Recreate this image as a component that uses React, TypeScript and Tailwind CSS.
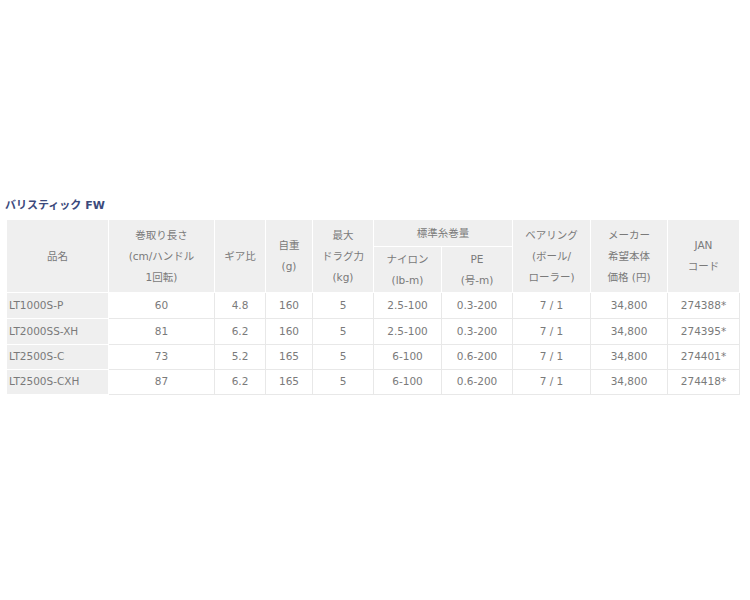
const headCell = 'border border-white bg-[#efefef] px-1 text-center align-middle font-normal leading-[21px]';
const bodyCell = 'border border-[#e8e8e8] bg-white px-1 text-center align-middle';

const rows = [
    ['LT1000S-P', '60', '4.8', '160', '5', '2.5-100', '0.3-200', '7 / 1', '34,800', '274388*'],
    ['LT2000SS-XH', '81', '6.2', '160', '5', '2.5-100', '0.3-200', '7 / 1', '34,800', '274395*'],
    ['LT2500S-C', '73', '5.2', '165', '5', '6-100', '0.6-200', '7 / 1', '34,800', '274401*'],
    ['LT2500S-CXH', '87', '6.2', '165', '5', '6-100', '0.6-200', '7 / 1', '34,800', '274418*'],
];

const widths = [102, 106, 51, 47, 61, 68, 71, 78, 77, 72];

const App = () => {
    return (
        <div
            className="min-h-[600px] w-[750px] bg-white pt-[199px] pl-[6px] text-[10.5px] text-[#7a7a7a]"
            style={{ fontFamily: '"DejaVu Sans", "Noto Sans CJK JP", sans-serif' }}
        >
            <h2 className="mb-[6px] -ml-px text-[11px] leading-[14px] font-bold text-[#3b4a7c]">
                バリスティック FW
            </h2>
            <table className="w-[732px] table-fixed border-collapse">
                <colgroup>
                    {widths.map((w, i) => (
                        <col key={i} style={{ width: w }} />
                    ))}
                </colgroup>
                <thead>
                    <tr className="h-[27px]">
                        <th rowSpan={2} className={headCell}>
                            品名
                        </th>
                        <th rowSpan={2} className={headCell}>
                            巻取り長さ
                            <br />
                            (cm/ハンドル
                            <br />
                            1回転)
                        </th>
                        <th rowSpan={2} className={headCell}>
                            ギア比
                        </th>
                        <th rowSpan={2} className={headCell}>
                            自重
                            <br />
                            (g)
                        </th>
                        <th rowSpan={2} className={headCell}>
                            最大
                            <br />
                            ドラグ力
                            <br />
                            (kg)
                        </th>
                        <th colSpan={2} className={headCell}>
                            標準糸巻量
                        </th>
                        <th rowSpan={2} className={headCell}>
                            ベアリング
                            <br />
                            (ボール/
                            <br />
                            ローラー)
                        </th>
                        <th rowSpan={2} className={headCell}>
                            メーカー
                            <br />
                            希望本体
                            <br />
                            価格 (円)
                        </th>
                        <th rowSpan={2} className={headCell}>
                            JAN
                            <br />
                            コード
                        </th>
                    </tr>
                    <tr className="h-[46px]">
                        <th className={headCell}>
                            ナイロン
                            <br />
                            (lb-m)
                        </th>
                        <th className={headCell}>
                            PE
                            <br />
                            (号-m)
                        </th>
                    </tr>
                </thead>
                <tbody>
                    {rows.map((row, r) => (
                        <tr key={r} className={r < 2 ? 'h-[26px]' : 'h-[25px]'}>
                            {row.map((v, i) =>
                                i === 0 ? (
                                    <td
                                        key={i}
                                        className="border border-white bg-[#efefef] px-[2px] text-left align-middle"
                                    >
                                        {v}
                                    </td>
                                ) : (
                                    <td key={i} className={bodyCell}>
                                        {v}
                                    </td>
                                ),
                            )}
                        </tr>
                    ))}
                </tbody>
            </table>
        </div>
    );
};

export default App;
